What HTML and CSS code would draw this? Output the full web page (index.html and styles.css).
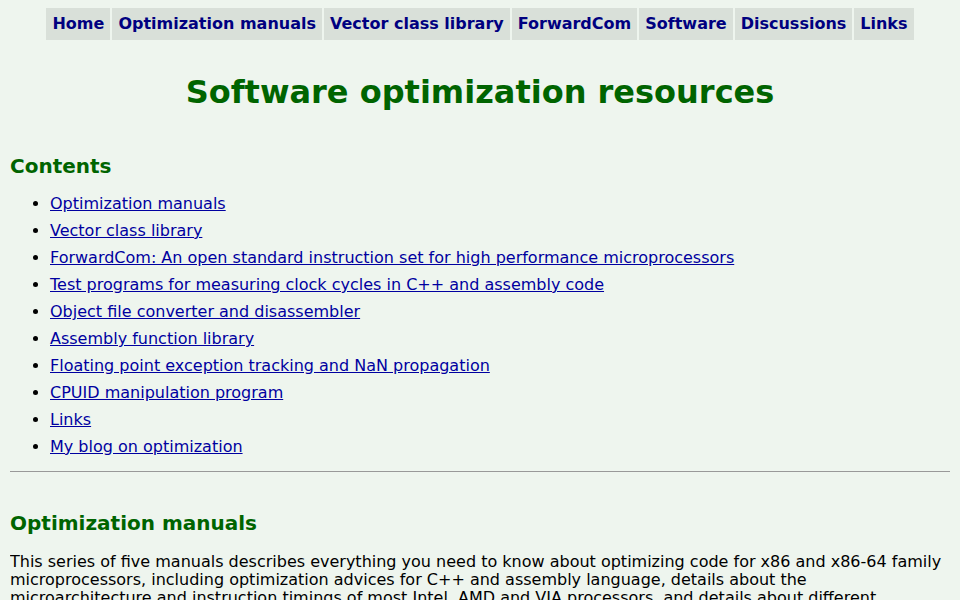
FILE: index.html
```html
<!DOCTYPE html>
<html lang="en">
<head>
    <meta charset="UTF-8">
    <title>Software optimization resources</title>
    <link rel="stylesheet" href="styles.css">
</head>
<body>
    <div class="menu">
        <a href="#">Home</a>
        <a href="#">Optimization manuals</a>
        <a href="#">Vector class library</a>
        <a href="#">ForwardCom</a>
        <a href="#">Software</a>
        <a href="#">Discussions</a>
        <a href="#">Links</a>
    </div>

    <h1>Software optimization resources</h1>

    <h2>Contents</h2>
    <ul class="toc">
        <li><a href="#manuals">Optimization manuals</a></li>
        <li><a href="#">Vector class library</a></li>
        <li><a href="#">ForwardCom: An open standard instruction set for high performance microprocessors</a></li>
        <li><a href="#">Test programs for measuring clock cycles in C++ and assembly code</a></li>
        <li><a href="#">Object file converter and disassembler</a></li>
        <li><a href="#">Assembly function library</a></li>
        <li><a href="#">Floating point exception tracking and NaN propagation</a></li>
        <li><a href="#">CPUID manipulation program</a></li>
        <li><a href="#">Links</a></li>
        <li><a href="#">My blog on optimization</a></li>
    </ul>

    <hr>

    <h2 id="manuals" class="section">Optimization manuals</h2>
    <p>This series of five manuals describes everything you need to know about optimizing code for x86 and x86-64 family
    microprocessors, including optimization advices for C++ and assembly language, details about the
    microarchitecture and instruction timings of most Intel, AMD and VIA processors, and details about different
    compilers and calling conventions.</p>
</body>
</html>
```

FILE: styles.css
```css
body {
    margin: 8px 10px;
    background-color: #eef5ee;
    color: #000;
    font-family: "DejaVu Sans", Verdana, sans-serif;
    font-size: 16px;
}

.menu {
    display: flex;
    justify-content: center;
    gap: 2px;
}

.menu a {
    display: block;
    padding: 0 6px;
    line-height: 32px;
    background-color: #d9e0d9;
    color: #000080;
    font-weight: bold;
    text-decoration: none;
}

h1 {
    margin: 30px 0 0;
    text-align: center;
    color: #006400;
    font-size: 32px;
    line-height: 44px;
}

h2 {
    margin: 0;
    color: #006400;
    font-size: 20px;
}

h1 + h2 {
    margin-top: 40px;
}

.toc {
    margin: 12px 0 0;
    padding-left: 40px;
}

.toc li {
    line-height: 27px;
}

a {
    color: #0000a0;
}

hr {
    margin: 11px 0 0;
    border: none;
    border-top: 1px solid #999;
}

h2.section {
    margin-top: 39px;
}

p {
    margin: 18px 0 0;
    line-height: 18px;
}
```
